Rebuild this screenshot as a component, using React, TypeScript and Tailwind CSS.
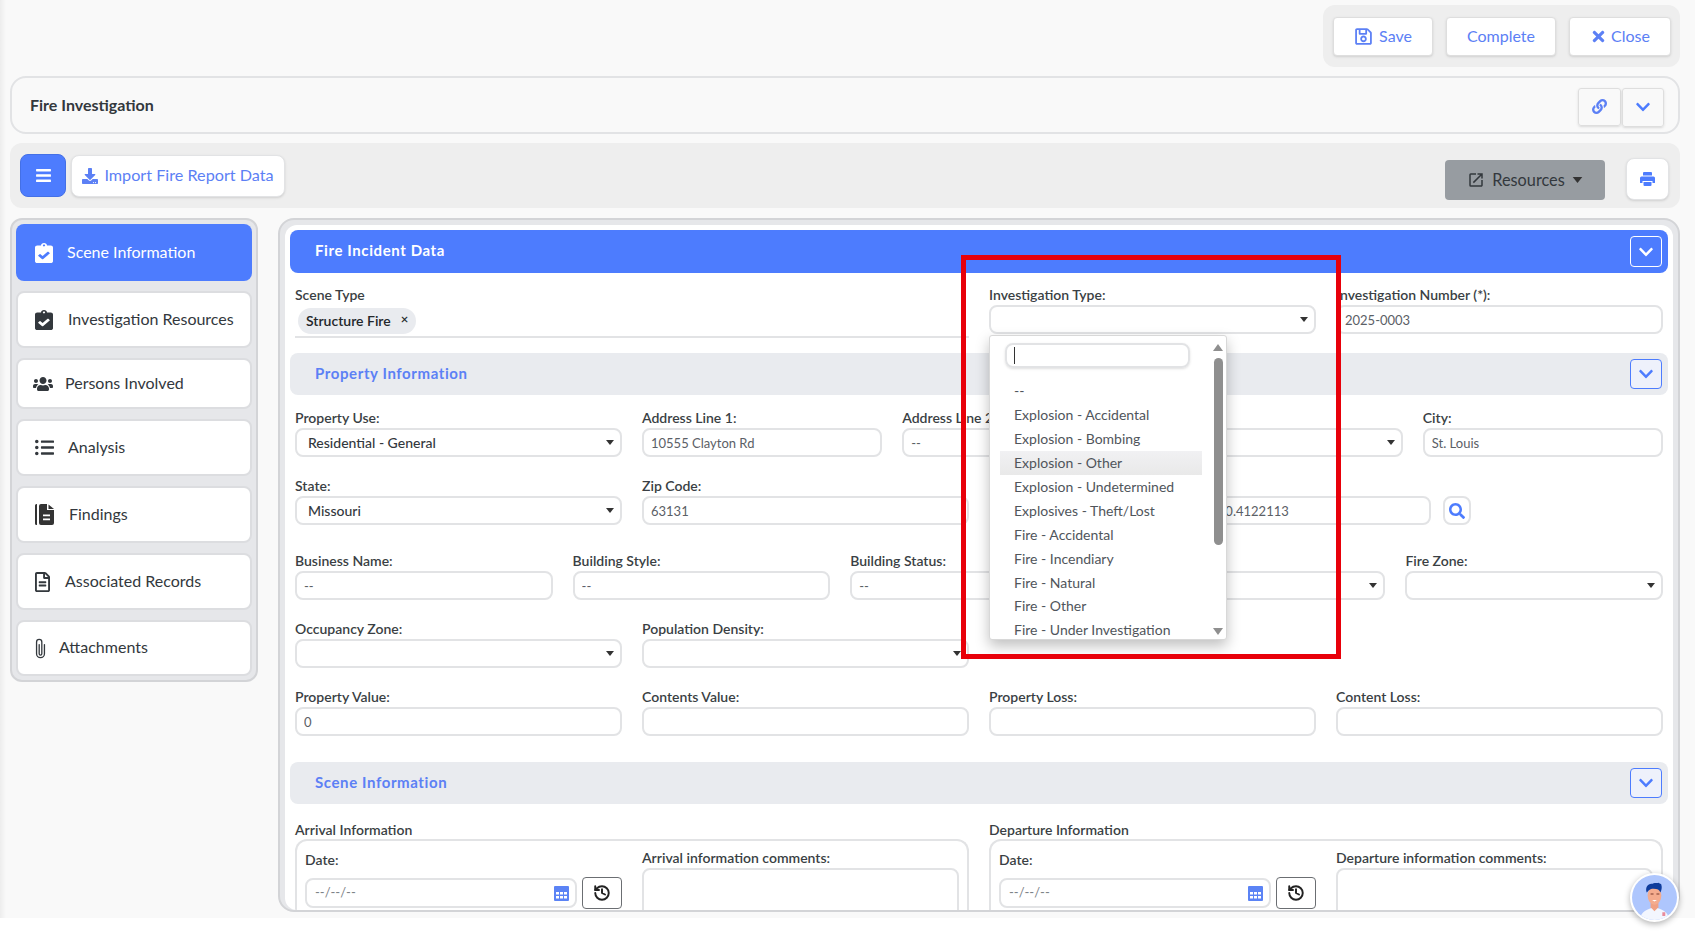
import { History } from "lucide-react";
import { MdOpenInNew } from "react-icons/md";
import { BsPaperclip } from "react-icons/bs";
import {
  FaBars,
  FaChevronDown,
  FaClipboardCheck,
  FaDownload,
  FaLink,
  FaListUl,
  FaRegFileAlt,
  FaRegSave,
  FaSearch,
  FaTimes,
  FaUsers,
} from "react-icons/fa";

const Caret = ({ className = "w-[8px] h-[5px]" }: { className?: string }) => (
  <svg viewBox="0 0 8 5" className={`fill-[#333] ${className}`}>
    <path d="M0 0h8L4 5z" />
  </svg>
);

const FindingsIcon = () => (
  <svg viewBox="0 0 20 21" className="w-[20px] h-[21px] fill-[#333]">
    <path d="M0 1.5A1.5 1.5 0 0 1 1.500 0H2v21h-.5A1.500 1.500 0 0 1 0 19.500z" />
    <path d="M4 2a2 2 0 0 1 2-2h6v6h7v13a2 2 0 0 1-2 2H6a2 2 0 0 1-2-2z" />
    <path d="M13.500 0.500 19 5h-5.500z" />
    <path d="M8 10.500h7v1.800H8zM8 14.500h7v1.800H8z" fill="#fff" />
  </svg>
);

const CalendarIcon = () => (
  <svg viewBox="0 0 15 15" className="w-[15px] h-[15px] shrink-0">
    <rect width="15" height="15" rx="1" fill="#5b83f5" />
    <g fill="#fff">
      <rect x="2" y="6" width="3" height="2.500" />
      <rect x="6" y="6" width="3" height="2.500" />
      <rect x="10" y="6" width="3" height="2.500" />
      <rect x="2" y="10" width="3" height="2.500" />
      <rect x="6" y="10" width="3" height="2.500" />
      <rect x="10" y="10" width="3" height="2.500" />
    </g>
  </svg>
);

const PrintIcon = () => (
  <svg viewBox="0 0 15 14" className="w-[15px] h-[14px] fill-[#4d7cfe]">
    <path d="M3 1a1 1 0 0 1 1-1h7a1 1 0 0 1 1 1v2.500H3z" />
    <path d="M1.500 4.500h12A1.500 1.500 0 0 1 15 6v5h-2.500V9h-10v2H0V6a1.500 1.500 0 0 1 1.500-1.500z" />
    <path d="M3.500 10h8v3a1 1 0 0 1-1 1h-6a1 1 0 0 1-1-1z" />
  </svg>
);

const Avatar = () => (
  <svg viewBox="0 0 46 46" className="w-full h-full rounded-full">
    <rect width="46" height="46" fill="#aec6fd" />
    <path d="M8 46c1-9 8-11 15-13 7 2 14 4 15 13z" fill="#f3f6fe" />
    <path d="M19 28h8v5l-4 4-4-4z" fill="#f0a183" />
    <ellipse cx="23" cy="21" rx="7" ry="9.500" fill="#f4ac8e" />
    <path d="M15 18c-2-6 2-10 6-9 2-2 4 0 6-1 1 1 3 1 3 2 1 3 0 6-1 8-1-3-3-4-7-4-4 0-5 2-7 4z" fill="#0f3c9c" />
    <path d="M19 19h3v1h-3zM25 19h3v1h-3z" fill="#7a3b2c" />
    <path d="M20.500 25.500h5l-2.500 1.500z" fill="#fff" />
    <path d="M31 38h3v4h-3z" fill="#e88c9c" />
  </svg>
);

const Label = ({ children }: { children: React.ReactNode }) => (
  <div className="h-[19px] text-[14px] leading-[17px] font-semibold text-[#3a3f44] whitespace-nowrap">
    {children}
  </div>
);

const TextInput = ({ value = "" }: { value?: string }) => (
  <input
    readOnly
    value={value}
    className="h-[29px] w-full rounded-lg border-2 border-[#e2e3e5] bg-white px-[7px] text-[13px] text-[#5b6066] outline-none"
  />
);

const SelectBox = ({ value = "" }: { value?: string }) => (
  <div className="flex h-[29px] items-center justify-between rounded-lg border-2 border-[#e2e3e5] bg-white pl-[11px] pr-[6px] text-[14px] font-medium text-[#33383d]">
    <span>{value}</span>
    <Caret />
  </div>
);

const InputField = ({ label, value }: { label: string; value?: string }) => (
  <div>
    <Label>{label}</Label>
    <TextInput value={value} />
  </div>
);

const SelectField = ({ label, value }: { label: string; value?: string }) => (
  <div>
    <Label>{label}</Label>
    <SelectBox value={value} />
  </div>
);

const SectionBar = ({ title, className = "" }: { title: string; className?: string }) => (
  <div className={`mx-[5px] flex h-[42px] items-center justify-between rounded-lg bg-[#e9ebef] pl-[25px] pr-[6px] ${className}`}>
    <span className="pb-[2px] text-[15px] font-bold tracking-[0.6px] text-[#5c80f5]">{title}</span>
    <button className="flex h-[30px] w-[32px] items-center justify-center rounded border border-[#4d7cfe] bg-[#eef1fb] text-[#4d7cfe]">
      <FaChevronDown size={16} />
    </button>
  </div>
);

const clipboardClass = "w-[18px] h-[20px]";

const navItems = [
  { label: "Scene Information", icon: <FaClipboardCheck className={clipboardClass} preserveAspectRatio="none" />, h: "h-[57px]", pl: "pl-[19px]", gap: "gap-[14px]", active: true },
  { label: "Investigation Resources", icon: <FaClipboardCheck className={clipboardClass} preserveAspectRatio="none" />, h: "h-[57px]", pl: "pl-[17px]", gap: "gap-[15px]" },
  { label: "Persons Involved", icon: <FaUsers size={20} />, h: "h-[51px]", pl: "pl-[15px]", gap: "gap-[12px]" },
  { label: "Analysis", icon: <FaListUl size={19} />, h: "h-[57px]", pl: "pl-[17px]", gap: "gap-[14px]" },
  { label: "Findings", icon: <FindingsIcon />, h: "h-[57px]", pl: "pl-[17px]", gap: "gap-[14px]" },
  { label: "Associated Records", icon: <FaRegFileAlt className="w-[15px] h-[20px]" preserveAspectRatio="none" />, h: "h-[57px]", pl: "pl-[17px]", gap: "gap-[15px]" },
  { label: "Attachments", icon: <BsPaperclip size={21} className="-ml-[5px]" />, h: "h-[56px]", pl: "pl-[17px]", gap: "gap-[8px]" },
];

const options = [
  "--",
  "Explosion - Accidental",
  "Explosion - Bombing",
  "Explosion - Other",
  "Explosion - Undetermined",
  "Explosives - Theft/Lost",
  "Fire - Accidental",
  "Fire - Incendiary",
  "Fire - Natural",
  "Fire - Other",
  "Fire - Under Investigation",
];

const TimeBlock = ({ title, comments }: { title: string; comments: string }) => (
  <div>
    <div className="h-[18px] text-[14px] font-semibold leading-[18px] text-[#3a3f44]">{title}</div>
    <div className="flex h-[120px] gap-[20px] rounded-t-xl border-2 border-b-0 border-[#e2e3e5] pl-[8px] pr-[8px]">
      <div className="w-[317px] pt-[10px]">
        <Label>Date:</Label>
        <div className="mt-[7px] flex items-center gap-[5px]">
          <div className="flex h-[30px] flex-1 items-center justify-between rounded-lg border-2 border-[#e2e3e5] pl-[8px] pr-[6px] text-[13px] text-[#7d8288]">
            <span>--/--/--</span>
            <CalendarIcon />
          </div>
          <button className="flex h-[32px] w-[40px] items-center justify-center rounded-[4px] border border-[#6b6e72] text-[#222]">
            <History size={18} strokeWidth={2.6} />
          </button>
        </div>
      </div>
      <div className="flex-1 pt-[8px]">
        <Label>{comments}</Label>
        <div className="h-[60px] rounded-lg border-2 border-[#e2e3e5]" />
      </div>
    </div>
  </div>
);

export default function App() {
  return (
    <div className="relative h-[935px] w-full overflow-hidden bg-white text-[#33383d] [font-family:Lato,sans-serif]">
      <div className="h-[918px] bg-[#f9f9f9] pl-[10px] pr-[15px] pt-[5px]">
        {/* top actions */}
        <div className="flex justify-end">
          <div className="flex h-[62px] w-[357px] items-center gap-[13px] rounded-xl bg-[#eeeeee] pl-[10px]">
            <button className="flex h-[39px] w-[100px] items-center justify-center gap-[6px] rounded border border-[#dedede] bg-white text-[16px] text-[#5c80f5] shadow-sm">
              <FaRegSave size={19} />
              Save
            </button>
            <button className="h-[39px] w-[110px] rounded border border-[#dedede] bg-white text-[16px] text-[#5c80f5] shadow-sm">
              Complete
            </button>
            <button className="flex h-[39px] w-[102px] items-center justify-center gap-[4px] rounded border border-[#dedede] bg-white text-[16px] text-[#5c80f5] shadow-sm">
              <FaTimes size={17} />
              Close
            </button>
          </div>
        </div>

        {/* title */}
        <div className="mt-[9px] flex h-[58px] items-center justify-between rounded-2xl border-2 border-[#e2e3e5] pl-[18px] pr-[14px]">
          <span className="text-[16px] font-bold text-[#33383d]">Fire Investigation</span>
          <div className="mt-[4px] flex items-center gap-[1px]">
            <button className="flex h-[38px] w-[43px] items-center justify-center rounded-[3px] border border-[#dedede] pb-[2px] text-[#5c80f5] shadow-sm">
              <FaLink size={15} />
            </button>
            <button className="flex h-[39px] w-[42px] items-center justify-center rounded-[3px] border border-[#dedede] text-[#4d7cfe] shadow-sm">
              <FaChevronDown size={16} />
            </button>
          </div>
        </div>

        {/* toolbar */}
        <div className="mt-[9px] flex h-[65px] items-center justify-between rounded-xl bg-[#eeeeee] pl-[10px] pr-[11px]">
          <div className="flex items-center gap-[5px]">
            <button className="flex h-[43px] w-[46px] items-center justify-center rounded-lg border border-[#4470e6] bg-[#4d7cfe] text-white">
              <FaBars size={17} />
            </button>
            <button className="flex h-[42px] w-[214px] items-center justify-center gap-[6px] rounded-lg border border-[#e2e3e5] bg-white text-[16.200px] text-[#5c80f5] shadow-sm">
              <FaDownload size={16} />
              Import Fire Report Data
            </button>
          </div>
          <div className="mt-[7px] flex items-end gap-[21px]">
            <button className="flex h-[40px] w-[160px] items-center justify-center gap-[7px] rounded bg-[#979ca1] text-[16.300px] text-[#33383d]">
              <MdOpenInNew size={18} />
              Resources
              <Caret className="w-[11px] h-[6px]" />
            </button>
            <button className="flex h-[42px] w-[43px] items-center justify-center rounded-lg border border-[#e2e3e5] bg-white shadow-sm">
              <PrintIcon />
            </button>
          </div>
        </div>

        {/* body */}
        <div className="mt-[10px] flex items-start gap-[20px]">
          <div className="flex w-[248px] flex-col gap-[10px] rounded-xl border-2 border-[#d3d4d7] bg-[#e6e7ea] p-[4px]">
            {navItems.map((item) => (
              <div
                key={item.label}
                className={`flex items-center rounded-lg ${item.h} ${item.pl} ${item.gap} text-[16px] ${
                  item.active
                    ? "bg-[#4d7cfe] text-white"
                    : "border-2 border-[#dcdde0] bg-white text-[#33383d]"
                }`}
              >
                {item.icon}
                <span className="pb-[2px]">{item.label}</span>
              </div>
            ))}
          </div>

          <div className="h-[694px] flex-1 rounded-2xl border-2 border-[#d3d4d7] bg-[#e6e7ea] pl-[5px] pr-[5px] pt-[5px]">
            <div className="h-full overflow-hidden rounded-xl bg-white pt-[5px]">
              <div className="mx-[5px] flex h-[43px] items-center justify-between rounded-lg bg-[#4d7cfe] pl-[25px] pr-[6px]">
                <span className="pb-[2px] text-[15px] font-bold tracking-[0.6px] text-white">Fire Incident Data</span>
                <button className="flex h-[31px] w-[32px] items-center justify-center rounded border border-white text-white">
                  <FaChevronDown size={16} />
                </button>
              </div>

              <div className="mx-[10px] mt-[13px] grid grid-cols-4 gap-x-[20px]">
                <div className="col-span-2 h-[52px] border-b-2 border-[#e2e3e5]">
                  <Label>Scene Type</Label>
                  <div className="ml-[3px] mt-[3px] inline-flex h-[26px] w-[118px] items-center gap-[10px] rounded-full bg-[#e9ebef] pb-[2px] pl-[8px] text-[14px] font-semibold text-[#23272b]">
                    Structure Fire
                    <span className="text-[13px]">×</span>
                  </div>
                </div>
                <SelectField label="Investigation Type:" />
                <InputField label="Investigation Number (*):" value="2025-0003" />
              </div>

              <SectionBar title="Property Information" className="mt-[15px]" />

              <div className="mx-[10px] mt-[14px] grid grid-cols-[327px_repeat(4,1fr)] gap-x-[20px]">
                <SelectField label="Property Use:" value="Residential - General" />
                <InputField label="Address Line 1:" value="10555 Clayton Rd" />
                <InputField label="Address Line 2:" value="--" />
                <SelectField label="Type:" />
                <InputField label="City:" value="St. Louis" />
              </div>

              <div className="mx-[10px] mt-[20px] grid grid-cols-4 gap-x-[20px]">
                <SelectField label="State:" value="Missouri" />
                <InputField label="Zip Code:" value="63131" />
                <div className="col-span-2 flex items-end gap-[12px]">
                  <div className="w-[196px]">
                    <InputField label="Coordinates:" value="38.6270" />
                  </div>
                  <div className="ml-[7px] w-[227px]">
                    <InputField label="" value="-90.4122113" />
                  </div>
                  <button className="flex h-[29px] w-[28px] items-center justify-center rounded-lg border-2 border-[#e2e3e5] text-[#4d7cfe]">
                    <FaSearch size={16} />
                  </button>
                </div>
              </div>

              <div className="mx-[10px] mt-[27px] grid grid-cols-5 gap-x-[20px]">
                <InputField label="Business Name:" value="--" />
                <InputField label="Building Style:" value="--" />
                <InputField label="Building Status:" value="--" />
                <SelectField label="Type:" />
                <SelectField label="Fire Zone:" />
              </div>

              <div className="mx-[10px] mt-[20px] grid grid-cols-4 gap-x-[20px]">
                <SelectField label="Occupancy Zone:" />
                <SelectField label="Population Density:" />
              </div>

              <div className="mx-[10px] mt-[20px] grid grid-cols-4 gap-x-[20px]">
                <InputField label="Property Value:" value="0" />
                <InputField label="Contents Value:" />
                <InputField label="Property Loss:" />
                <InputField label="Content Loss:" />
              </div>

              <SectionBar title="Scene Information" className="mt-[26px]" />

              <div className="mx-[10px] mt-[17px] grid grid-cols-2 gap-x-[20px]">
                <TimeBlock title="Arrival Information" comments="Arrival information comments:" />
                <TimeBlock title="Departure Information" comments="Departure information comments:" />
              </div>
            </div>
          </div>
        </div>
      </div>

      {/* left edge shade */}
      <div className="absolute left-0 top-0 h-[918px] w-[6px] bg-gradient-to-r from-[#ededed] to-transparent" />

      {/* open dropdown */}
      <div className="absolute left-[989px] top-[335px] h-[305px] w-[238px] overflow-hidden rounded-[3px] border border-[#d8d8d8] bg-white shadow-[0_6px_14px_rgba(0,0,0,0.25)]">
        <div className="ml-[15px] mt-[7px] flex h-[25px] w-[185px] items-center rounded-lg border-2 border-[#e2e3e5] pl-[7px] shadow-sm">
          <span className="h-[17px] w-px bg-[#333]" />
        </div>
        <div className="ml-[10px] mt-[11px] w-[202px] text-[14px] text-[#50555b]">
          {options.map((o) => (
            <div
              key={o}
              className={`flex h-[23.900px] items-center pl-[14px] ${
                o === "Explosion - Other" ? "bg-gradient-to-b from-[#f1f1f3] to-[#e9e9e9]" : ""
              }`}
            >
              {o}
            </div>
          ))}
        </div>
        <div className="absolute right-[3px] top-[8px] h-0 w-0 border-x-[5px] border-b-[7px] border-x-transparent border-b-[#8f8f8f]" />
        <div className="absolute right-[3px] top-[22px] h-[187px] w-[9px] rounded-full bg-[#8f8f8f]" />
        <div className="absolute bottom-[4px] right-[3px] h-0 w-0 border-x-[5px] border-t-[7px] border-x-transparent border-t-[#8f8f8f]" />
      </div>

      {/* annotation */}
      <div className="absolute left-[961px] top-[255px] h-[404px] w-[380px] border-[5px] border-[#e8000a]" />

      {/* chat avatar */}
      <div className="absolute left-[1630px] top-[873px] h-[49px] w-[49px] rounded-full border-[2px] border-white bg-white shadow-[0_2px_6px_rgba(0,0,0,0.3)]">
        <Avatar />
      </div>
    </div>
  );
}
